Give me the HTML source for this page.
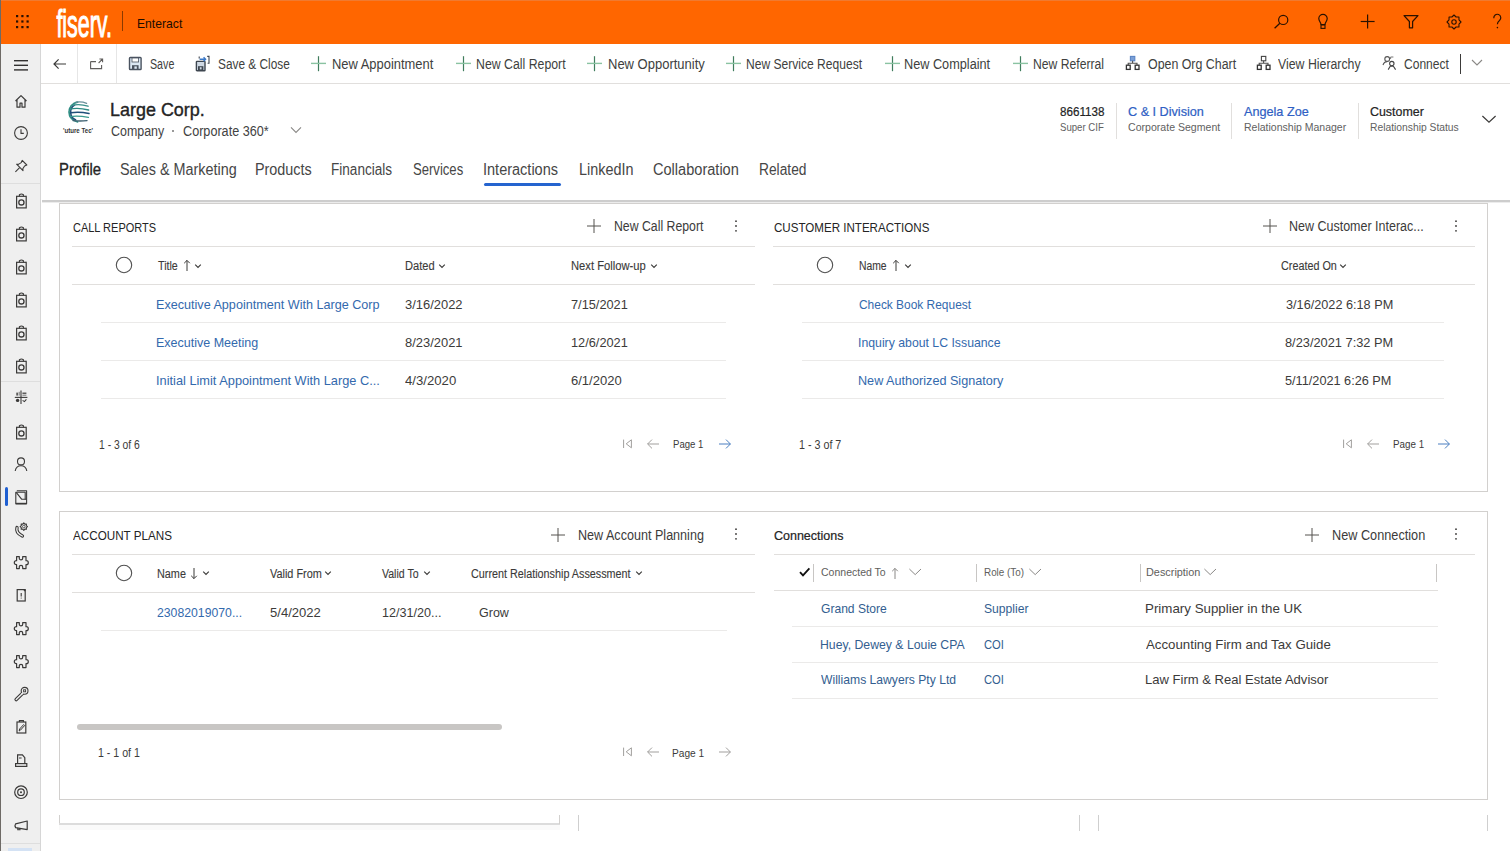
<!DOCTYPE html>
<html><head><meta charset="utf-8"><title>Large Corp. - Enteract</title>
<style>
html,body{margin:0;padding:0;}
body{width:1510px;height:851px;overflow:hidden;position:relative;background:#fff;font-family:'Liberation Sans', sans-serif;}
.t{position:absolute;white-space:nowrap;transform-origin:0 0;}
svg{display:block;overflow:visible;}
</style></head><body>
<div style="position:absolute;left:0px;top:0px;width:1510px;height:44px;background:#ff6600;"></div>
<div style="position:absolute;left:0px;top:0px;width:1510px;height:1px;background:#f07a30;"></div>
<svg style="position:absolute;left:0px;top:0px;" width="44" height="44" viewBox="0 0 44 44"><rect x="16" y="15" width="2.2" height="2.2" fill="#2a0f00"/><rect x="16" y="20.4" width="2.2" height="2.2" fill="#2a0f00"/><rect x="16" y="26" width="2.2" height="2.2" fill="#2a0f00"/><rect x="21.3" y="15" width="2.2" height="2.2" fill="#2a0f00"/><rect x="21.3" y="20.4" width="2.2" height="2.2" fill="#2a0f00"/><rect x="21.3" y="26" width="2.2" height="2.2" fill="#2a0f00"/><rect x="26.5" y="15" width="2.2" height="2.2" fill="#2a0f00"/><rect x="26.5" y="20.4" width="2.2" height="2.2" fill="#2a0f00"/><rect x="26.5" y="26" width="2.2" height="2.2" fill="#2a0f00"/></svg>
<svg style="position:absolute;left:50px;top:0px;" width="70" height="44" viewBox="0 0 70 44"><text x="6.4" y="36.6" font-family="Liberation Sans" font-size="39" fill="#fff" stroke="#fff" stroke-width="1.1" textLength="55.5" lengthAdjust="spacingAndGlyphs">fiserv.</text></svg>
<div style="position:absolute;left:122px;top:11px;width:1px;height:20px;background:#8a3a00;"></div>
<svg style="position:absolute;left:1270px;top:10px;" width="24" height="24" viewBox="0 0 24 24"><circle cx="13.2" cy="9.9" r="4.6" fill="none" stroke="#2a1200" stroke-width="1.2"/><line x1="9.9" y1="13.2" x2="4.6" y2="18.3" stroke="#2a1200" stroke-width="1.3"/></svg>
<svg style="position:absolute;left:1312px;top:10px;" width="24" height="24" viewBox="0 0 24 24"><path d="M9 14.5 C9 12.5 6.8 11.3 6.8 8.6 A4.2 4.2 0 0 1 15.2 8.6 C15.2 11.3 13 12.5 13 14.5 Z" fill="none" stroke="#2a1200" stroke-width="1.2"/><rect x="9" y="15" width="4" height="3.4" fill="none" stroke="#2a1200" stroke-width="1.1"/></svg>
<svg style="position:absolute;left:1356px;top:10px;" width="24" height="24" viewBox="0 0 24 24"><line x1="11.6" y1="4.6" x2="11.6" y2="18.5" stroke="#2a1200" stroke-width="1.2"/><line x1="4.7" y1="11.5" x2="18.6" y2="11.5" stroke="#2a1200" stroke-width="1.2"/></svg>
<svg style="position:absolute;left:1400px;top:10px;" width="24" height="24" viewBox="0 0 24 24"><path d="M4 5.6 H18 L12.6 11.5 V17.8 H9.4 V11.5 Z" fill="none" stroke="#2a1200" stroke-width="1.2" stroke-linejoin="round"/></svg>
<svg style="position:absolute;left:1447px;top:14.5px;" width="14" height="14" viewBox="0 0 14 14"><polygon points="14.00,7.00 11.99,9.07 11.95,11.95 9.07,11.99 7.00,14.00 4.93,11.99 2.05,11.95 2.01,9.07 0.00,7.00 2.01,4.93 2.05,2.05 4.93,2.01 7.00,0.00 9.07,2.01 11.95,2.05 11.99,4.93" fill="none" stroke="#2a1200" stroke-width="1.1" stroke-linejoin="round" transform="translate(0,0)"/><circle cx="7" cy="7" r="2.2" fill="none" stroke="#2a1200" stroke-width="1.1"/></svg>
<svg style="position:absolute;left:1490px;top:10px;" width="14" height="24" viewBox="0 0 14 24"><path d="M3.8 8.2 A3.5 3.5 0 1 1 9.5 10.5 C8 11.6 7.4 12.3 7.4 14.2" fill="none" stroke="#2a1200" stroke-width="1.2"/><circle cx="7.4" cy="17.6" r="0.8" fill="#2a1200"/></svg>
<div style="position:absolute;left:0px;top:44px;width:40px;height:807px;background:#efefef;"></div>
<div style="position:absolute;left:40px;top:44px;width:1px;height:807px;background:#d6d6d6;"></div>
<div style="position:absolute;left:0px;top:0px;width:1px;height:851px;background:#6e6a66;"></div>
<div style="position:absolute;left:1px;top:183px;width:39px;height:1px;background:#dedede;"></div>
<div style="position:absolute;left:1px;top:381px;width:39px;height:1px;background:#dedede;"></div>
<div style="position:absolute;left:1px;top:843px;width:39px;height:1px;background:#dedede;"></div>
<div style="position:absolute;left:5px;top:487px;width:3px;height:19px;background:#1f5fd1;border-radius:1.5px"></div>
<div style="position:absolute;left:8px;top:848px;width:24px;height:3px;background:#d4e2f4;"></div>
<svg style="position:absolute;left:12px;top:58px;" width="18" height="14" viewBox="0 0 18 14"><rect x="2" y="2" width="14" height="1.4" fill="#323130"/><rect x="2" y="6.6" width="14" height="1.4" fill="#323130"/><rect x="2" y="11.2" width="14" height="1.4" fill="#323130"/></svg>
<svg style="position:absolute;left:12px;top:92px;" width="18" height="18" viewBox="0 0 18 18"><path d="M3.5 9 L9 3.6 L14.5 9 M5 7.8 V15.2 H8 V11.2 H10 V15.2 H13 V7.8" fill="none" stroke="#3b3a39" stroke-width="1.2" stroke-linejoin="round"/></svg>
<svg style="position:absolute;left:12px;top:124px;" width="18" height="18" viewBox="0 0 18 18"><circle cx="9" cy="9" r="6.4" fill="none" stroke="#3b3a39" stroke-width="1.1"/><path d="M9 5.2 V9.4 H11.8" fill="none" stroke="#3b3a39" stroke-width="1.1"/></svg>
<svg style="position:absolute;left:12px;top:157px;" width="18" height="18" viewBox="0 0 18 18"><path d="M10.2 3.4 L14.8 8 L12.6 9 L10.8 11.8 L11 13.6 L4.6 7.2 L6.4 7.4 L9.2 5.6 Z" fill="none" stroke="#3b3a39" stroke-width="1.1" stroke-linejoin="round"/><line x1="7.6" y1="10.6" x2="3.4" y2="14.8" stroke="#3b3a39" stroke-width="1.1"/></svg>
<svg style="position:absolute;left:12px;top:191px;" width="18" height="18" viewBox="0 0 18 18"><rect x="4.6" y="5.3" width="9.6" height="11.6" fill="none" stroke="#3b3a39" stroke-width="1.2"/><path d="M7.4 5.3 V3.8 Q9.4 2.2 11.4 3.8 V5.3" fill="none" stroke="#3b3a39" stroke-width="1.1"/><circle cx="9.4" cy="11.4" r="2.6" fill="none" stroke="#3b3a39" stroke-width="1.3"/></svg>
<svg style="position:absolute;left:12px;top:224px;" width="18" height="18" viewBox="0 0 18 18"><rect x="4.6" y="5.3" width="9.6" height="11.6" fill="none" stroke="#3b3a39" stroke-width="1.2"/><path d="M7.4 5.3 V3.8 Q9.4 2.2 11.4 3.8 V5.3" fill="none" stroke="#3b3a39" stroke-width="1.1"/><circle cx="9.4" cy="11.4" r="2.6" fill="none" stroke="#3b3a39" stroke-width="1.3"/></svg>
<svg style="position:absolute;left:12px;top:257px;" width="18" height="18" viewBox="0 0 18 18"><rect x="4.6" y="5.3" width="9.6" height="11.6" fill="none" stroke="#3b3a39" stroke-width="1.2"/><path d="M7.4 5.3 V3.8 Q9.4 2.2 11.4 3.8 V5.3" fill="none" stroke="#3b3a39" stroke-width="1.1"/><circle cx="9.4" cy="11.4" r="2.6" fill="none" stroke="#3b3a39" stroke-width="1.3"/></svg>
<svg style="position:absolute;left:12px;top:290px;" width="18" height="18" viewBox="0 0 18 18"><rect x="4.6" y="5.3" width="9.6" height="11.6" fill="none" stroke="#3b3a39" stroke-width="1.2"/><path d="M7.4 5.3 V3.8 Q9.4 2.2 11.4 3.8 V5.3" fill="none" stroke="#3b3a39" stroke-width="1.1"/><circle cx="9.4" cy="11.4" r="2.6" fill="none" stroke="#3b3a39" stroke-width="1.3"/></svg>
<svg style="position:absolute;left:12px;top:323px;" width="18" height="18" viewBox="0 0 18 18"><rect x="4.6" y="5.3" width="9.6" height="11.6" fill="none" stroke="#3b3a39" stroke-width="1.2"/><path d="M7.4 5.3 V3.8 Q9.4 2.2 11.4 3.8 V5.3" fill="none" stroke="#3b3a39" stroke-width="1.1"/><circle cx="9.4" cy="11.4" r="2.6" fill="none" stroke="#3b3a39" stroke-width="1.3"/></svg>
<svg style="position:absolute;left:12px;top:356px;" width="18" height="18" viewBox="0 0 18 18"><rect x="4.6" y="5.3" width="9.6" height="11.6" fill="none" stroke="#3b3a39" stroke-width="1.2"/><path d="M7.4 5.3 V3.8 Q9.4 2.2 11.4 3.8 V5.3" fill="none" stroke="#3b3a39" stroke-width="1.1"/><circle cx="9.4" cy="11.4" r="2.6" fill="none" stroke="#3b3a39" stroke-width="1.3"/></svg>
<svg style="position:absolute;left:12px;top:388px;" width="18" height="18" viewBox="0 0 18 18"><line x1="9" y1="2.6" x2="9" y2="16" stroke="#3b3a39" stroke-width="1.1"/><line x1="2.8" y1="9.4" x2="15.4" y2="9.4" stroke="#3b3a39" stroke-width="1.1"/><rect x="4.4" y="4.6" width="1.4" height="3" fill="#3b3a39"/><rect x="6.6" y="3.8" width="1.2" height="3.8" fill="#888"/><rect x="10.4" y="4.6" width="4" height="1.2" fill="#3b3a39"/><rect x="10.4" y="6.6" width="4" height="1.2" fill="#888"/><circle cx="5.6" cy="12.4" r="1.7" fill="#3b3a39"/><path d="M10.6 12.4 L12.4 13.6 L14.4 11.4" fill="none" stroke="#3b3a39" stroke-width="1.1"/></svg>
<svg style="position:absolute;left:12px;top:422px;" width="18" height="18" viewBox="0 0 18 18"><rect x="4.6" y="5.3" width="9.6" height="11.6" fill="none" stroke="#3b3a39" stroke-width="1.2"/><path d="M7.4 5.3 V3.8 Q9.4 2.2 11.4 3.8 V5.3" fill="none" stroke="#3b3a39" stroke-width="1.1"/><circle cx="9.4" cy="11.4" r="2.6" fill="none" stroke="#3b3a39" stroke-width="1.3"/></svg>
<svg style="position:absolute;left:12px;top:455px;" width="18" height="18" viewBox="0 0 18 18"><circle cx="9" cy="6.4" r="3.5" fill="none" stroke="#3b3a39" stroke-width="1.1"/><path d="M3.2 16 Q4 10.8 9 10.8 Q14 10.8 14.8 16" fill="none" stroke="#3b3a39" stroke-width="1.1"/></svg>
<svg style="position:absolute;left:12px;top:488px;" width="18" height="18" viewBox="0 0 18 18"><path d="M4.8 2.8 H14.6 V15.8 H3.8 V4.2 H13.2 V11.4" fill="none" stroke="#3b3a39" stroke-width="1.1" stroke-linejoin="round"/><path d="M4.2 4.4 L9.6 11.2 H14.4" fill="none" stroke="#3b3a39" stroke-width="1.1"/><line x1="3.8" y1="15.6" x2="14.6" y2="15.6" stroke="#3b3a39" stroke-width="1.6"/></svg>
<svg style="position:absolute;left:12px;top:520px;" width="18" height="18" viewBox="0 0 18 18"><path d="M5 7.6 Q3.6 12.6 10.4 16" fill="none" stroke="#3b3a39" stroke-width="3.4" stroke-linecap="round"/><path d="M5 7.6 Q3.6 12.6 10.4 16" fill="none" stroke="#efefef" stroke-width="1.3" stroke-linecap="round"/><polygon points="15.50,6.60 14.29,7.63 14.42,9.22 12.83,9.09 11.80,10.30 10.77,9.09 9.18,9.22 9.31,7.63 8.10,6.60 9.31,5.57 9.18,3.98 10.77,4.11 11.80,2.90 12.83,4.11 14.42,3.98 14.29,5.57" fill="#efefef" stroke="#3b3a39" stroke-width="1.1" stroke-linejoin="round"/><circle cx="11.8" cy="6.6" r="1.3" fill="none" stroke="#3b3a39" stroke-width="0.8"/></svg>
<svg style="position:absolute;left:12px;top:553px;" width="18" height="18" viewBox="0 0 18 18"><path d="M4.3 3.6 H7 V5.2 A1.7 1.7 0 0 0 10.4 5.2 V3.6 H13.7 V7.7 H14 A2 2 0 0 1 14 11.7 H13.7 V15.6 H10.4 V14 A1.7 1.7 0 0 0 7 14 V15.6 H4.3 V11.7 H4 A2 2 0 0 1 4 7.7 H4.3 Z" fill="none" stroke="#3b3a39" stroke-width="1.2" stroke-linejoin="round" transform="translate(0.3,0)"/></svg>
<svg style="position:absolute;left:12px;top:586px;" width="18" height="18" viewBox="0 0 18 18"><rect x="5.2" y="3.6" width="8" height="11.4" fill="none" stroke="#3b3a39" stroke-width="1.2"/><line x1="9.2" y1="7" x2="9.2" y2="10.6" stroke="#3b3a39" stroke-width="1.1"/><circle cx="9.2" cy="12" r="0.6" fill="#3b3a39"/><path d="M12 3.6 L13.2 5" stroke="#3b3a39" stroke-width="1.6"/></svg>
<svg style="position:absolute;left:12px;top:619px;" width="18" height="18" viewBox="0 0 18 18"><path d="M4.3 3.6 H7 V5.2 A1.7 1.7 0 0 0 10.4 5.2 V3.6 H13.7 V7.7 H14 A2 2 0 0 1 14 11.7 H13.7 V15.6 H10.4 V14 A1.7 1.7 0 0 0 7 14 V15.6 H4.3 V11.7 H4 A2 2 0 0 1 4 7.7 H4.3 Z" fill="none" stroke="#3b3a39" stroke-width="1.2" stroke-linejoin="round" transform="translate(0.3,0)"/></svg>
<svg style="position:absolute;left:12px;top:652px;" width="18" height="18" viewBox="0 0 18 18"><path d="M4.3 3.6 H7 V5.2 A1.7 1.7 0 0 0 10.4 5.2 V3.6 H13.7 V7.7 H14 A2 2 0 0 1 14 11.7 H13.7 V15.6 H10.4 V14 A1.7 1.7 0 0 0 7 14 V15.6 H4.3 V11.7 H4 A2 2 0 0 1 4 7.7 H4.3 Z" fill="none" stroke="#3b3a39" stroke-width="1.2" stroke-linejoin="round" transform="translate(0.3,0)"/></svg>
<svg style="position:absolute;left:12px;top:684px;" width="18" height="18" viewBox="0 0 18 18"><line x1="4.2" y1="15.6" x2="10.6" y2="9.2" stroke="#3b3a39" stroke-width="3.6" stroke-linecap="round"/><line x1="4.2" y1="15.6" x2="10.6" y2="9.2" stroke="#efefef" stroke-width="1.4" stroke-linecap="round"/><circle cx="12.6" cy="6.8" r="3.4" fill="#efefef" stroke="#3b3a39" stroke-width="1.1"/><line x1="9.4" y1="10.4" x2="11" y2="8.8" stroke="#efefef" stroke-width="1.6"/><rect x="11.6" y="5.8" width="2" height="2" fill="none" stroke="#3b3a39" stroke-width="0.9"/></svg>
<svg style="position:absolute;left:12px;top:717px;" width="18" height="18" viewBox="0 0 18 18"><rect x="5" y="5" width="8.8" height="11" fill="none" stroke="#3b3a39" stroke-width="1.2"/><path d="M7.4 5 V3.6 H11.4 V5" fill="none" stroke="#3b3a39" stroke-width="1.1"/><path d="M7.2 14 L7.6 12 L11.6 7.6 L12.6 8.6 L8.6 13 Z" fill="none" stroke="#3b3a39" stroke-width="1"/></svg>
<svg style="position:absolute;left:12px;top:751px;" width="18" height="18" viewBox="0 0 18 18"><path d="M5.6 12.6 V3.8 H10.4 L12.8 6.6 V12.6" fill="none" stroke="#3b3a39" stroke-width="1.2"/><rect x="3.6" y="12.6" width="11.2" height="2.8" fill="none" stroke="#3b3a39" stroke-width="1.2"/><line x1="7" y1="7" x2="9.6" y2="7" stroke="#3b3a39" stroke-width="1"/></svg>
<svg style="position:absolute;left:12px;top:783px;" width="18" height="18" viewBox="0 0 18 18"><circle cx="9" cy="9.2" r="6.3" fill="none" stroke="#3b3a39" stroke-width="1.2"/><circle cx="9" cy="9.2" r="3.3" fill="none" stroke="#3b3a39" stroke-width="1.2"/><circle cx="9" cy="9.2" r="1" fill="#3b3a39"/></svg>
<svg style="position:absolute;left:12px;top:816px;" width="18" height="18" viewBox="0 0 18 18"><path d="M3.6 7.8 L15.2 5 V13.6 L3.6 11.6 Q2.4 9.7 3.6 7.8 Z" fill="none" stroke="#3b3a39" stroke-width="1.2" stroke-linejoin="round"/><path d="M5.8 11.9 V13.8 H8 V12.3" fill="none" stroke="#3b3a39" stroke-width="1.1"/></svg>
<div style="position:absolute;left:41px;top:83px;width:1469px;height:1px;background:#e1dfdd;"></div>
<div style="position:absolute;left:77px;top:44px;width:1px;height:39px;background:#e6e6e6;"></div>
<div style="position:absolute;left:116px;top:44px;width:1px;height:39px;background:#e6e6e6;"></div>
<svg style="position:absolute;left:50px;top:55px;" width="20" height="18" viewBox="0 0 20 18"><path d="M4 9 H16 M8.6 4.4 L4 9 L8.6 13.6" fill="none" stroke="#3b3a39" stroke-width="1.2"/></svg>
<svg style="position:absolute;left:88px;top:55px;" width="18" height="18" viewBox="0 0 18 18"><path d="M2.6 6.6 V13.6 H13.6 V10 M2.6 6.6 H8" fill="none" stroke="#605e5c" stroke-width="1.1"/><path d="M10.6 8 L14.4 4.2 M11.4 4 H14.6 V7.2" fill="none" stroke="#605e5c" stroke-width="1.1"/></svg>
<svg style="position:absolute;left:128px;top:56px;" width="15" height="15" viewBox="0 0 15 15"><rect x="1.5" y="1.5" width="11.6" height="12" rx="0.8" fill="#dbe7f3" stroke="#4a5360" stroke-width="1.4"/><rect x="4" y="2" width="6.6" height="4" fill="#fff" stroke="#4a5360" stroke-width="0.8"/><rect x="4" y="9.2" width="6.6" height="4.3" fill="#4a5360"/><rect x="6.4" y="10.4" width="2.4" height="2.4" fill="#dbe7f3"/></svg>
<svg style="position:absolute;left:195px;top:55px;" width="16" height="17" viewBox="0 0 16 17"><rect x="1.4" y="6.4" width="8.6" height="9.4" rx="0.6" fill="#cfd9e4" stroke="#3e4650" stroke-width="1.4"/><rect x="3" y="11.2" width="5.4" height="4.4" fill="#3e4650"/><rect x="4.8" y="12.2" width="1.8" height="2.2" fill="#cfd9e4"/><path d="M4.6 4.2 H10.6 M8.6 2.2 L10.6 4.2 L8.6 6.2" fill="none" stroke="#3a78c8" stroke-width="1.4"/><path d="M4.2 1.4 V3.4 M12.2 1.4 H14 V8.2 H12.6" fill="none" stroke="#3e4650" stroke-width="1.1"/></svg>
<svg style="position:absolute;left:310px;top:55px;" width="17" height="17" viewBox="0 0 17 17"><line x1="8.5" y1="1.2" x2="8.5" y2="16.2" stroke="#3f7d5d" stroke-width="1.2"/><line x1="1" y1="8.4" x2="16" y2="8.4" stroke="#8ac3a2" stroke-width="1.4"/></svg>
<svg style="position:absolute;left:455px;top:55px;" width="17" height="17" viewBox="0 0 17 17"><line x1="8.5" y1="1.2" x2="8.5" y2="16.2" stroke="#3f7d5d" stroke-width="1.2"/><line x1="1" y1="8.4" x2="16" y2="8.4" stroke="#8ac3a2" stroke-width="1.4"/></svg>
<svg style="position:absolute;left:586px;top:55px;" width="17" height="17" viewBox="0 0 17 17"><line x1="8.5" y1="1.2" x2="8.5" y2="16.2" stroke="#3f7d5d" stroke-width="1.2"/><line x1="1" y1="8.4" x2="16" y2="8.4" stroke="#8ac3a2" stroke-width="1.4"/></svg>
<svg style="position:absolute;left:725px;top:55px;" width="17" height="17" viewBox="0 0 17 17"><line x1="8.5" y1="1.2" x2="8.5" y2="16.2" stroke="#3f7d5d" stroke-width="1.2"/><line x1="1" y1="8.4" x2="16" y2="8.4" stroke="#8ac3a2" stroke-width="1.4"/></svg>
<svg style="position:absolute;left:884px;top:55px;" width="17" height="17" viewBox="0 0 17 17"><line x1="8.5" y1="1.2" x2="8.5" y2="16.2" stroke="#3f7d5d" stroke-width="1.2"/><line x1="1" y1="8.4" x2="16" y2="8.4" stroke="#8ac3a2" stroke-width="1.4"/></svg>
<svg style="position:absolute;left:1012px;top:55px;" width="17" height="17" viewBox="0 0 17 17"><line x1="8.5" y1="1.2" x2="8.5" y2="16.2" stroke="#3f7d5d" stroke-width="1.2"/><line x1="1" y1="8.4" x2="16" y2="8.4" stroke="#8ac3a2" stroke-width="1.4"/></svg>
<svg style="position:absolute;left:1125px;top:54px;" width="16" height="18" viewBox="0 0 16 18"><rect x="5.4" y="2.4" width="4.4" height="4.4" fill="#7a9fd6" stroke="#5a84c4" stroke-width="1.1"/><path d="M7.6 6.8 V9.2 M3.2 11 V9.2 H12 V11" fill="none" stroke="#505050" stroke-width="1.1"/><rect x="1.4" y="11.2" width="3.8" height="4.2" fill="#fff" stroke="#333" stroke-width="1.3"/><rect x="10.2" y="11.2" width="3.8" height="4.2" fill="#fff" stroke="#333" stroke-width="1.3"/></svg>
<svg style="position:absolute;left:1255.5px;top:54px;" width="16" height="18" viewBox="0 0 16 18"><rect x="5.4" y="2.4" width="4.4" height="4.4" fill="#fff" stroke="#444" stroke-width="1.1"/><path d="M7.6 6.8 V9.2 M3.2 11 V9.2 H12 V11" fill="none" stroke="#505050" stroke-width="1.1"/><rect x="1.4" y="11.2" width="3.8" height="4.2" fill="#fff" stroke="#333" stroke-width="1.3"/><rect x="10.2" y="11.2" width="3.8" height="4.2" fill="#fff" stroke="#333" stroke-width="1.3"/></svg>
<svg style="position:absolute;left:1382px;top:55px;" width="16" height="16" viewBox="0 0 16 16"><circle cx="5.2" cy="4" r="2.4" fill="none" stroke="#555" stroke-width="1.1"/><path d="M1 10 Q2 6.6 5.2 6.6" fill="none" stroke="#555" stroke-width="1.1"/><path d="M8.6 2 H11.4 M8.6 2 V4" fill="none" stroke="#777" stroke-width="1"/><circle cx="9.8" cy="8.6" r="2.2" fill="none" stroke="#444" stroke-width="1.1"/><path d="M6.2 14.6 L8.2 11.2 H11.4 L13.6 14.6" fill="none" stroke="#444" stroke-width="1.1"/></svg>
<div style="position:absolute;left:1460px;top:54px;width:1px;height:20px;background:#3b3a39;"></div>
<svg style="position:absolute;left:1470px;top:56px;" width="14" height="12" viewBox="0 0 14 12"><path d="M2 4 L7 9 L12 4" fill="none" stroke="#8a8886" stroke-width="1.1"/></svg>
<svg style="position:absolute;left:60px;top:98px;" width="36" height="38" viewBox="0 0 36 38"><g fill="none" stroke-linecap="round">
<path d="M17.6 4.2 A10 9.9 0 0 0 17.6 23.8" stroke="#2f8f84" stroke-width="1.7"/>
<path d="M14.6 7.2 A6.4 7.6 0 0 0 15.6 21.6" stroke="#1f4f78" stroke-width="1.5"/>
<path d="M16 4.2 Q22 3.4 26.6 5.4" stroke="#6a8f9a" stroke-width="1.3"/>
<path d="M11.4 7.6 Q19 5.4 28 8.2" stroke="#3a8f8a" stroke-width="1.4"/>
<path d="M9.4 11.2 Q18 9.2 28.6 12" stroke="#2d8a84" stroke-width="1.4"/>
<path d="M10.6 14.8 Q19 13.2 29 15.6" stroke="#1f4f7a" stroke-width="1.5"/>
<path d="M9.8 18.6 Q18 17.4 28.4 19.4" stroke="#3a9a90" stroke-width="1.4"/>
<path d="M13 22.6 Q20 23.4 27 22.6" stroke="#3d6070" stroke-width="1.4"/>
</g>
<text x="3" y="34.6" font-family="Liberation Sans" font-size="6.4" font-weight="700" fill="#333" textLength="30" lengthAdjust="spacingAndGlyphs">'uture Tec'</text></svg>
<div style="position:absolute;left:172.4px;top:130.4px;width:1.6px;height:1.6px;background:#777;border-radius:1px"></div>
<svg style="position:absolute;left:289px;top:125px;" width="14" height="10" viewBox="0 0 14 10"><path d="M2 2.4 L7 7.4 L12 2.4" fill="none" stroke="#8a8886" stroke-width="1.1"/></svg>
<div style="position:absolute;left:1116px;top:103px;width:1px;height:36px;background:#e1dfdd;"></div>
<div style="position:absolute;left:1231px;top:103px;width:1px;height:36px;background:#e1dfdd;"></div>
<div style="position:absolute;left:1358px;top:103px;width:1px;height:36px;background:#e1dfdd;"></div>
<svg style="position:absolute;left:1480px;top:113px;" width="18" height="12" viewBox="0 0 18 12"><path d="M2.4 3 L9 9.2 L15.6 3" fill="none" stroke="#3b3a39" stroke-width="1.2"/></svg>
<div style="position:absolute;left:484px;top:183px;width:77px;height:3px;background:#2564cf;border-radius:1.5px"></div>
<div style="position:absolute;left:42px;top:200px;width:1468px;height:2px;background:#cdcdcd;"></div>
<div style="position:absolute;left:42px;top:202px;width:1468px;height:1px;background:#ececec;"></div>
<div style="position:absolute;left:59px;top:203px;width:1427px;height:287px;border:1px solid #d2d0ce;background:#fff"></div>
<div style="position:absolute;left:59px;top:511px;width:1427px;height:287px;border:1px solid #d2d0ce;background:#fff"></div>
<div style="position:absolute;left:59px;top:815px;width:1px;height:9px;background:#d2d0ce;"></div>
<div style="position:absolute;left:59px;top:823px;width:501px;height:2px;background:#dcdcdc;"></div>
<div style="position:absolute;left:559px;top:815px;width:1px;height:9px;background:#d2d0ce;"></div>
<div style="position:absolute;left:59px;top:825px;width:501px;height:5px;background:#fafafa;"></div>
<div style="position:absolute;left:578px;top:815px;width:1px;height:16px;background:#cfcfcf;"></div>
<div style="position:absolute;left:1079px;top:815px;width:1px;height:16px;background:#cfcfcf;"></div>
<div style="position:absolute;left:1098px;top:815px;width:1px;height:16px;background:#cfcfcf;"></div>
<div style="position:absolute;left:1487px;top:815px;width:1px;height:16px;background:#cfcfcf;"></div>
<svg style="position:absolute;left:586.4px;top:217.8px;" width="16" height="16" viewBox="0 0 16 16"><line x1="8" y1="1" x2="8" y2="15" stroke="#55534f" stroke-width="1"/><line x1="1" y1="8" x2="15" y2="8" stroke="#55534f" stroke-width="1"/></svg>
<svg style="position:absolute;left:732.6px;top:217.5px;" width="6" height="16" viewBox="0 0 6 16"><circle cx="3" cy="3.2" r="0.9" fill="#3b3a39"/><circle cx="3" cy="8" r="0.9" fill="#3b3a39"/><circle cx="3" cy="12.8" r="0.9" fill="#3b3a39"/></svg>
<div style="position:absolute;left:72px;top:246px;width:683px;height:1px;background:#e1dfdd;"></div>
<svg style="position:absolute;left:114.6px;top:256px;" width="18" height="18" viewBox="0 0 18 18"><circle cx="9" cy="9" r="7.7" fill="none" stroke="#505050" stroke-width="1.1"/></svg>
<svg style="position:absolute;left:182.6px;top:259.2px;" width="8" height="13" viewBox="0 0 8 13"><path d="M4 1.4 V12 M1.2 4.2 L4 1.4 L6.8 4.2" fill="none" stroke="#3b3a39" stroke-width="1"/></svg>
<svg style="position:absolute;left:194px;top:261.6px;" width="8" height="8" viewBox="0 0 8 8"><path d="M1.2 2.6 L4 5.4 L6.8 2.6" fill="none" stroke="#3b3a39" stroke-width="1.15"/></svg>
<svg style="position:absolute;left:437.6px;top:261.6px;" width="8" height="8" viewBox="0 0 8 8"><path d="M1.2 2.6 L4 5.4 L6.8 2.6" fill="none" stroke="#3b3a39" stroke-width="1.15"/></svg>
<svg style="position:absolute;left:649.8px;top:261.6px;" width="8" height="8" viewBox="0 0 8 8"><path d="M1.2 2.6 L4 5.4 L6.8 2.6" fill="none" stroke="#3b3a39" stroke-width="1.15"/></svg>
<div style="position:absolute;left:72px;top:284px;width:683px;height:1px;background:#e1dfdd;"></div>
<div style="position:absolute;left:101px;top:322px;width:625px;height:1px;background:#ebeae9;"></div>
<div style="position:absolute;left:101px;top:360px;width:625px;height:1px;background:#ebeae9;"></div>
<div style="position:absolute;left:101px;top:398px;width:625px;height:1px;background:#ebeae9;"></div>
<svg style="position:absolute;left:622px;top:437.5px;" width="12" height="12" viewBox="0 0 12 12"><line x1="1.6" y1="1.6" x2="1.6" y2="10" stroke="#a19f9d" stroke-width="1"/><path d="M9.4 1.8 L4.2 5.8 L9.4 9.8 Z" fill="none" stroke="#a19f9d" stroke-width="1"/></svg>
<svg style="position:absolute;left:646px;top:437.5px;" width="14" height="12" viewBox="0 0 14 12"><path d="M13 6 H1.6 M6 1.6 L1.6 6 L6 10.4" fill="none" stroke="#a19f9d" stroke-width="1"/></svg>
<svg style="position:absolute;left:718px;top:437.5px;" width="14" height="12" viewBox="0 0 14 12"><path d="M1 6 H12.4 M8 1.6 L12.4 6 L8 10.4" fill="none" stroke="#4a7fc1" stroke-width="1"/></svg>
<svg style="position:absolute;left:1261.5px;top:217.8px;" width="16" height="16" viewBox="0 0 16 16"><line x1="8" y1="1" x2="8" y2="15" stroke="#55534f" stroke-width="1"/><line x1="1" y1="8" x2="15" y2="8" stroke="#55534f" stroke-width="1"/></svg>
<svg style="position:absolute;left:1452.8px;top:217.5px;" width="6" height="16" viewBox="0 0 6 16"><circle cx="3" cy="3.2" r="0.9" fill="#3b3a39"/><circle cx="3" cy="8" r="0.9" fill="#3b3a39"/><circle cx="3" cy="12.8" r="0.9" fill="#3b3a39"/></svg>
<div style="position:absolute;left:773px;top:246px;width:702px;height:1px;background:#e1dfdd;"></div>
<svg style="position:absolute;left:815.7px;top:256px;" width="18" height="18" viewBox="0 0 18 18"><circle cx="9" cy="9" r="7.7" fill="none" stroke="#505050" stroke-width="1.1"/></svg>
<svg style="position:absolute;left:892.3px;top:259.2px;" width="8" height="13" viewBox="0 0 8 13"><path d="M4 1.4 V12 M1.2 4.2 L4 1.4 L6.8 4.2" fill="none" stroke="#3b3a39" stroke-width="1"/></svg>
<svg style="position:absolute;left:904px;top:261.6px;" width="8" height="8" viewBox="0 0 8 8"><path d="M1.2 2.6 L4 5.4 L6.8 2.6" fill="none" stroke="#3b3a39" stroke-width="1.15"/></svg>
<svg style="position:absolute;left:1339px;top:261.6px;" width="8" height="8" viewBox="0 0 8 8"><path d="M1.2 2.6 L4 5.4 L6.8 2.6" fill="none" stroke="#3b3a39" stroke-width="1.15"/></svg>
<div style="position:absolute;left:773px;top:284px;width:702px;height:1px;background:#e1dfdd;"></div>
<div style="position:absolute;left:802px;top:322px;width:642px;height:1px;background:#ebeae9;"></div>
<div style="position:absolute;left:802px;top:360px;width:642px;height:1px;background:#ebeae9;"></div>
<div style="position:absolute;left:802px;top:398px;width:642px;height:1px;background:#ebeae9;"></div>
<svg style="position:absolute;left:1341.6px;top:437.5px;" width="12" height="12" viewBox="0 0 12 12"><line x1="1.6" y1="1.6" x2="1.6" y2="10" stroke="#a19f9d" stroke-width="1"/><path d="M9.4 1.8 L4.2 5.8 L9.4 9.8 Z" fill="none" stroke="#a19f9d" stroke-width="1"/></svg>
<svg style="position:absolute;left:1365.5px;top:437.5px;" width="14" height="12" viewBox="0 0 14 12"><path d="M13 6 H1.6 M6 1.6 L1.6 6 L6 10.4" fill="none" stroke="#a19f9d" stroke-width="1"/></svg>
<svg style="position:absolute;left:1437px;top:437.5px;" width="14" height="12" viewBox="0 0 14 12"><path d="M1 6 H12.4 M8 1.6 L12.4 6 L8 10.4" fill="none" stroke="#4a7fc1" stroke-width="1"/></svg>
<svg style="position:absolute;left:549.7px;top:526.5px;" width="16" height="16" viewBox="0 0 16 16"><line x1="8" y1="1" x2="8" y2="15" stroke="#55534f" stroke-width="1"/><line x1="1" y1="8" x2="15" y2="8" stroke="#55534f" stroke-width="1"/></svg>
<svg style="position:absolute;left:732.9px;top:526px;" width="6" height="16" viewBox="0 0 6 16"><circle cx="3" cy="3.2" r="0.9" fill="#3b3a39"/><circle cx="3" cy="8" r="0.9" fill="#3b3a39"/><circle cx="3" cy="12.8" r="0.9" fill="#3b3a39"/></svg>
<div style="position:absolute;left:72px;top:554px;width:683px;height:1px;background:#e1dfdd;"></div>
<svg style="position:absolute;left:114.7px;top:563.8px;" width="18" height="18" viewBox="0 0 18 18"><circle cx="9" cy="9" r="7.7" fill="none" stroke="#505050" stroke-width="1.1"/></svg>
<svg style="position:absolute;left:189.8px;top:567px;" width="8" height="13" viewBox="0 0 8 13"><path d="M4 1 V11.6 M1.2 8.8 L4 11.6 L6.8 8.8" fill="none" stroke="#3b3a39" stroke-width="1"/></svg>
<svg style="position:absolute;left:201.6px;top:569.4px;" width="8" height="8" viewBox="0 0 8 8"><path d="M1.2 2.6 L4 5.4 L6.8 2.6" fill="none" stroke="#3b3a39" stroke-width="1.15"/></svg>
<svg style="position:absolute;left:323.6px;top:569.4px;" width="8" height="8" viewBox="0 0 8 8"><path d="M1.2 2.6 L4 5.4 L6.8 2.6" fill="none" stroke="#3b3a39" stroke-width="1.15"/></svg>
<svg style="position:absolute;left:423px;top:569.4px;" width="8" height="8" viewBox="0 0 8 8"><path d="M1.2 2.6 L4 5.4 L6.8 2.6" fill="none" stroke="#3b3a39" stroke-width="1.15"/></svg>
<svg style="position:absolute;left:634.7px;top:569.4px;" width="8" height="8" viewBox="0 0 8 8"><path d="M1.2 2.6 L4 5.4 L6.8 2.6" fill="none" stroke="#3b3a39" stroke-width="1.15"/></svg>
<div style="position:absolute;left:72px;top:592px;width:683px;height:1px;background:#e1dfdd;"></div>
<div style="position:absolute;left:101px;top:630px;width:626px;height:1px;background:#ebeae9;"></div>
<div style="position:absolute;left:77px;top:724px;width:425px;height:6px;background:#c8c6c4;border-radius:3px"></div>
<svg style="position:absolute;left:621.6px;top:746.3px;" width="12" height="12" viewBox="0 0 12 12"><line x1="1.6" y1="1.6" x2="1.6" y2="10" stroke="#a19f9d" stroke-width="1"/><path d="M9.4 1.8 L4.2 5.8 L9.4 9.8 Z" fill="none" stroke="#a19f9d" stroke-width="1"/></svg>
<svg style="position:absolute;left:645.6px;top:746.3px;" width="14" height="12" viewBox="0 0 14 12"><path d="M13 6 H1.6 M6 1.6 L1.6 6 L6 10.4" fill="none" stroke="#a19f9d" stroke-width="1"/></svg>
<svg style="position:absolute;left:717.5px;top:746.3px;" width="14" height="12" viewBox="0 0 14 12"><path d="M1 6 H12.4 M8 1.6 L12.4 6 L8 10.4" fill="none" stroke="#a19f9d" stroke-width="1"/></svg>
<svg style="position:absolute;left:1303.8px;top:526.5px;" width="16" height="16" viewBox="0 0 16 16"><line x1="8" y1="1" x2="8" y2="15" stroke="#55534f" stroke-width="1"/><line x1="1" y1="8" x2="15" y2="8" stroke="#55534f" stroke-width="1"/></svg>
<svg style="position:absolute;left:1452.5px;top:526px;" width="6" height="16" viewBox="0 0 6 16"><circle cx="3" cy="3.2" r="0.9" fill="#3b3a39"/><circle cx="3" cy="8" r="0.9" fill="#3b3a39"/><circle cx="3" cy="12.8" r="0.9" fill="#3b3a39"/></svg>
<div style="position:absolute;left:774px;top:554px;width:701px;height:1px;background:#e1dfdd;"></div>
<svg style="position:absolute;left:798px;top:566px;" width="14" height="12" viewBox="0 0 14 12"><path d="M2 6.2 L5 9.4 L11.4 2.4" fill="none" stroke="#111" stroke-width="1.8"/></svg>
<div style="position:absolute;left:813px;top:564px;width:1px;height:18px;background:#c8c6c4;"></div>
<div style="position:absolute;left:976px;top:564px;width:1px;height:18px;background:#c8c6c4;"></div>
<div style="position:absolute;left:1140px;top:564px;width:1px;height:18px;background:#c8c6c4;"></div>
<div style="position:absolute;left:1436px;top:564px;width:1px;height:18px;background:#c8c6c4;"></div>
<svg style="position:absolute;left:891.3px;top:566.6px;" width="8" height="13" viewBox="0 0 8 13"><path d="M4 1.4 V12 M1.2 4.2 L4 1.4 L6.8 4.2" fill="none" stroke="#8a8886" stroke-width="1"/></svg>
<svg style="position:absolute;left:908px;top:567px;" width="15" height="10" viewBox="0 0 15 10"><path d="M1.4 2 L7.2 7.6 L13 2" fill="none" stroke="#8a8886" stroke-width="1"/></svg>
<svg style="position:absolute;left:1028px;top:567px;" width="15" height="10" viewBox="0 0 15 10"><path d="M1.4 2 L7.2 7.6 L13 2" fill="none" stroke="#8a8886" stroke-width="1"/></svg>
<svg style="position:absolute;left:1203px;top:567px;" width="15" height="10" viewBox="0 0 15 10"><path d="M1.4 2 L7.2 7.6 L13 2" fill="none" stroke="#8a8886" stroke-width="1"/></svg>
<div style="position:absolute;left:774px;top:590px;width:664px;height:1px;background:#e1dfdd;"></div>
<div style="position:absolute;left:792px;top:626px;width:646px;height:1px;background:#ebeae9;"></div>
<div style="position:absolute;left:792px;top:662px;width:646px;height:1px;background:#ebeae9;"></div>
<div style="position:absolute;left:792px;top:698px;width:646px;height:1px;background:#ebeae9;"></div>
<div class="t" style="left:137.06px;top:16.80px;font-size:13px;line-height:13px;color:#1c0c00;transform:scaleX(0.9351);">Enteract</div>
<div class="t" style="left:149.50px;top:57.15px;font-size:14px;line-height:14px;color:#403f3e;transform:scaleX(0.7627);">Save</div>
<div class="t" style="left:217.50px;top:57.15px;font-size:14px;line-height:14px;color:#403f3e;transform:scaleX(0.8467);">Save &amp; Close</div>
<div class="t" style="left:331.88px;top:57.15px;font-size:14px;line-height:14px;color:#403f3e;transform:scaleX(0.9232);">New Appointment</div>
<div class="t" style="left:475.92px;top:57.15px;font-size:14px;line-height:14px;color:#403f3e;transform:scaleX(0.8789);">New Call Report</div>
<div class="t" style="left:607.77px;top:57.15px;font-size:14px;line-height:14px;color:#403f3e;transform:scaleX(0.9286);">New Opportunity</div>
<div class="t" style="left:746.14px;top:57.15px;font-size:14px;line-height:14px;color:#403f3e;transform:scaleX(0.8622);">New Service Request</div>
<div class="t" style="left:904.49px;top:57.15px;font-size:14px;line-height:14px;color:#403f3e;transform:scaleX(0.9071);">New Complaint</div>
<div class="t" style="left:1033.13px;top:57.15px;font-size:14px;line-height:14px;color:#403f3e;transform:scaleX(0.8687);">New Referral</div>
<div class="t" style="left:1147.80px;top:57.15px;font-size:14px;line-height:14px;color:#403f3e;transform:scaleX(0.8846);">Open Org Chart</div>
<div class="t" style="left:1278.00px;top:57.15px;font-size:14px;line-height:14px;color:#403f3e;transform:scaleX(0.8798);">View Hierarchy</div>
<div class="t" style="left:1403.70px;top:57.15px;font-size:14px;line-height:14px;color:#403f3e;transform:scaleX(0.8612);">Connect</div>
<div class="t" style="left:110.46px;top:99.92px;font-size:19px;line-height:19px;color:#242424;-webkit-text-stroke:0.38px #242424;transform:scaleX(0.9444);">Large Corp.</div>
<div class="t" style="left:111.40px;top:123.55px;font-size:14px;line-height:14px;color:#424242;transform:scaleX(0.8879);">Company</div>
<div class="t" style="left:182.80px;top:123.55px;font-size:14px;line-height:14px;color:#424242;transform:scaleX(0.9026);">Corporate 360*</div>
<div class="t" style="left:1060.00px;top:104.50px;font-size:13px;line-height:13px;color:#242424;-webkit-text-stroke:0.22px #242424;transform:scaleX(0.8965);">8661138</div>
<div class="t" style="left:1060.00px;top:121.69px;font-size:11px;line-height:11px;color:#616161;transform:scaleX(0.8729);">Super CIF</div>
<div class="t" style="left:1128.00px;top:104.50px;font-size:13px;line-height:13px;color:#2f5fc4;-webkit-text-stroke:0.22px #2f5fc4;transform:scaleX(0.9719);">C &amp; I Division</div>
<div class="t" style="left:1128.00px;top:121.69px;font-size:11px;line-height:11px;color:#616161;transform:scaleX(0.9610);">Corporate Segment</div>
<div class="t" style="left:1243.50px;top:104.50px;font-size:13px;line-height:13px;color:#2f5fc4;-webkit-text-stroke:0.22px #2f5fc4;transform:scaleX(0.9734);">Angela Zoe</div>
<div class="t" style="left:1243.50px;top:121.69px;font-size:11px;line-height:11px;color:#616161;transform:scaleX(0.9549);">Relationship Manager</div>
<div class="t" style="left:1369.60px;top:104.50px;font-size:13px;line-height:13px;color:#242424;-webkit-text-stroke:0.22px #242424;transform:scaleX(0.9541);">Customer</div>
<div class="t" style="left:1369.60px;top:121.69px;font-size:11px;line-height:11px;color:#616161;transform:scaleX(0.9362);">Relationship Status</div>
<div class="t" style="left:59.07px;top:161.76px;font-size:16px;line-height:16px;color:#242424;-webkit-text-stroke:0.32px #242424;transform:scaleX(0.9268);">Profile</div>
<div class="t" style="left:119.80px;top:161.76px;font-size:16px;line-height:16px;color:#464646;transform:scaleX(0.8989);">Sales &amp; Marketing</div>
<div class="t" style="left:255.10px;top:161.76px;font-size:16px;line-height:16px;color:#464646;transform:scaleX(0.8980);">Products</div>
<div class="t" style="left:331.15px;top:161.76px;font-size:16px;line-height:16px;color:#464646;transform:scaleX(0.8489);">Financials</div>
<div class="t" style="left:413.00px;top:161.76px;font-size:16px;line-height:16px;color:#464646;transform:scaleX(0.8182);">Services</div>
<div class="t" style="left:483.29px;top:161.76px;font-size:16px;line-height:16px;color:#464646;transform:scaleX(0.9069);">Interactions</div>
<div class="t" style="left:578.70px;top:161.76px;font-size:16px;line-height:16px;color:#464646;transform:scaleX(0.8994);">LinkedIn</div>
<div class="t" style="left:653.00px;top:161.76px;font-size:16px;line-height:16px;color:#464646;transform:scaleX(0.9102);">Collaboration</div>
<div class="t" style="left:758.84px;top:161.76px;font-size:16px;line-height:16px;color:#464646;transform:scaleX(0.8601);">Related</div>
<div class="t" style="left:72.80px;top:220.70px;font-size:13px;line-height:13px;color:#242424;transform:scaleX(0.8449);">CALL REPORTS</div>
<div class="t" style="left:614.42px;top:219.15px;font-size:14px;line-height:14px;color:#3c3b3a;transform:scaleX(0.8769);">New Call Report</div>
<div class="t" style="left:157.50px;top:260.44px;font-size:12px;line-height:12px;color:#3b3a39;-webkit-text-stroke:0.12px #3b3a39;transform:scaleX(0.8913);">Title</div>
<div class="t" style="left:405.00px;top:260.44px;font-size:12px;line-height:12px;color:#3b3a39;-webkit-text-stroke:0.12px #3b3a39;transform:scaleX(0.9251);">Dated</div>
<div class="t" style="left:571.00px;top:260.44px;font-size:12px;line-height:12px;color:#3b3a39;-webkit-text-stroke:0.12px #3b3a39;transform:scaleX(0.9334);">Next Follow-up</div>
<div class="t" style="left:156.03px;top:297.70px;font-size:13px;line-height:13px;color:#3369ad;transform:scaleX(0.9696);">Executive Appointment With Large Corp</div>
<div class="t" style="left:405.00px;top:297.70px;font-size:13px;line-height:13px;color:#3c3b3a;transform:scaleX(0.9947);">3/16/2022</div>
<div class="t" style="left:571.00px;top:297.70px;font-size:13px;line-height:13px;color:#3c3b3a;transform:scaleX(0.9826);">7/15/2021</div>
<div class="t" style="left:156.04px;top:335.75px;font-size:13px;line-height:13px;color:#3369ad;transform:scaleX(0.9620);">Executive Meeting</div>
<div class="t" style="left:405.00px;top:335.75px;font-size:13px;line-height:13px;color:#3c3b3a;transform:scaleX(0.9947);">8/23/2021</div>
<div class="t" style="left:571.00px;top:335.75px;font-size:13px;line-height:13px;color:#3c3b3a;transform:scaleX(0.9826);">12/6/2021</div>
<div class="t" style="left:156.02px;top:373.80px;font-size:13px;line-height:13px;color:#3369ad;transform:scaleX(0.9836);">Initial Limit Appointment With Large C...</div>
<div class="t" style="left:405.00px;top:373.80px;font-size:13px;line-height:13px;color:#3c3b3a;transform:scaleX(1.0124);">4/3/2020</div>
<div class="t" style="left:571.00px;top:373.80px;font-size:13px;line-height:13px;color:#3c3b3a;transform:scaleX(1.0025);">6/1/2020</div>
<div class="t" style="left:98.90px;top:438.64px;font-size:12px;line-height:12px;color:#3c3b3a;transform:scaleX(0.8619);">1 - 3 of 6</div>
<div class="t" style="left:672.90px;top:439.29px;font-size:11px;line-height:11px;color:#3c3b3a;transform:scaleX(0.8720);">Page 1</div>
<div class="t" style="left:773.60px;top:220.70px;font-size:13px;line-height:13px;color:#242424;transform:scaleX(0.8903);">CUSTOMER INTERACTIONS</div>
<div class="t" style="left:1288.91px;top:219.15px;font-size:14px;line-height:14px;color:#3c3b3a;transform:scaleX(0.8923);">New Customer Interac...</div>
<div class="t" style="left:858.80px;top:260.44px;font-size:12px;line-height:12px;color:#3b3a39;-webkit-text-stroke:0.12px #3b3a39;transform:scaleX(0.8628);">Name</div>
<div class="t" style="left:1280.60px;top:260.44px;font-size:12px;line-height:12px;color:#3b3a39;-webkit-text-stroke:0.12px #3b3a39;transform:scaleX(0.8996);">Created On</div>
<div class="t" style="left:858.80px;top:297.70px;font-size:13px;line-height:13px;color:#3369ad;transform:scaleX(0.9175);">Check Book Request</div>
<div class="t" style="left:1286.40px;top:297.70px;font-size:13px;line-height:13px;color:#3c3b3a;transform:scaleX(0.9759);">3/16/2022 6:18 PM</div>
<div class="t" style="left:857.86px;top:335.75px;font-size:13px;line-height:13px;color:#3369ad;transform:scaleX(0.9439);">Inquiry about LC Issuance</div>
<div class="t" style="left:1285.40px;top:335.75px;font-size:13px;line-height:13px;color:#3c3b3a;transform:scaleX(0.9851);">8/23/2021 7:32 PM</div>
<div class="t" style="left:857.83px;top:373.80px;font-size:13px;line-height:13px;color:#3369ad;transform:scaleX(0.9713);">New Authorized Signatory</div>
<div class="t" style="left:1285.40px;top:373.80px;font-size:13px;line-height:13px;color:#3c3b3a;transform:scaleX(0.9772);">5/11/2021 6:26 PM</div>
<div class="t" style="left:799.20px;top:438.64px;font-size:12px;line-height:12px;color:#3c3b3a;transform:scaleX(0.8933);">1 - 3 of 7</div>
<div class="t" style="left:1392.80px;top:439.29px;font-size:11px;line-height:11px;color:#3c3b3a;transform:scaleX(0.8922);">Page 1</div>
<div class="t" style="left:72.80px;top:528.90px;font-size:13px;line-height:13px;color:#242424;transform:scaleX(0.8976);">ACCOUNT PLANS</div>
<div class="t" style="left:578.10px;top:527.65px;font-size:14px;line-height:14px;color:#3c3b3a;transform:scaleX(0.8988);">New Account Planning</div>
<div class="t" style="left:156.80px;top:568.04px;font-size:12px;line-height:12px;color:#3b3a39;-webkit-text-stroke:0.12px #3b3a39;transform:scaleX(0.9030);">Name</div>
<div class="t" style="left:269.60px;top:568.04px;font-size:12px;line-height:12px;color:#3b3a39;-webkit-text-stroke:0.12px #3b3a39;transform:scaleX(0.9085);">Valid From</div>
<div class="t" style="left:382.00px;top:568.04px;font-size:12px;line-height:12px;color:#3b3a39;-webkit-text-stroke:0.12px #3b3a39;transform:scaleX(0.8783);">Valid To</div>
<div class="t" style="left:471.40px;top:568.04px;font-size:12px;line-height:12px;color:#3b3a39;-webkit-text-stroke:0.12px #3b3a39;transform:scaleX(0.8996);">Current Relationship Assessment</div>
<div class="t" style="left:156.80px;top:606.30px;font-size:13px;line-height:13px;color:#3369ad;transform:scaleX(0.9415);">23082019070...</div>
<div class="t" style="left:269.60px;top:606.30px;font-size:13px;line-height:13px;color:#3c3b3a;transform:scaleX(1.0045);">5/4/2022</div>
<div class="t" style="left:382.00px;top:606.30px;font-size:13px;line-height:13px;color:#3c3b3a;transform:scaleX(0.9700);">12/31/20...</div>
<div class="t" style="left:478.80px;top:606.30px;font-size:13px;line-height:13px;color:#3c3b3a;transform:scaleX(0.9630);">Grow</div>
<div class="t" style="left:98.00px;top:746.54px;font-size:12px;line-height:12px;color:#3c3b3a;transform:scaleX(0.8849);">1 - 1 of 1</div>
<div class="t" style="left:671.90px;top:747.69px;font-size:11px;line-height:11px;color:#3c3b3a;transform:scaleX(0.9238);">Page 1</div>
<div class="t" style="left:774.20px;top:528.90px;font-size:13px;line-height:13px;color:#242424;-webkit-text-stroke:0.22px #242424;transform:scaleX(0.9606);">Connections</div>
<div class="t" style="left:1332.09px;top:527.65px;font-size:14px;line-height:14px;color:#3c3b3a;transform:scaleX(0.9075);">New Connection</div>
<div class="t" style="left:820.80px;top:566.57px;font-size:11.5px;line-height:11.5px;color:#605e5c;transform:scaleX(0.9140);">Connected To</div>
<div class="t" style="left:983.60px;top:566.57px;font-size:11.5px;line-height:11.5px;color:#605e5c;transform:scaleX(0.8586);">Role (To)</div>
<div class="t" style="left:1146.20px;top:566.57px;font-size:11.5px;line-height:11.5px;color:#605e5c;transform:scaleX(0.9453);">Description</div>
<div class="t" style="left:820.80px;top:601.90px;font-size:13px;line-height:13px;color:#335e90;transform:scaleX(0.9294);">Grand Store</div>
<div class="t" style="left:983.60px;top:601.90px;font-size:13px;line-height:13px;color:#335e90;transform:scaleX(0.9345);">Supplier</div>
<div class="t" style="left:1145.17px;top:601.90px;font-size:13px;line-height:13px;color:#3c3b3a;transform:scaleX(1.0256);">Primary Supplier in the UK</div>
<div class="t" style="left:819.86px;top:637.65px;font-size:13px;line-height:13px;color:#335e90;transform:scaleX(0.9427);">Huey, Dewey &amp; Louie CPA</div>
<div class="t" style="left:983.60px;top:637.65px;font-size:13px;line-height:13px;color:#335e90;transform:scaleX(0.8622);">COI</div>
<div class="t" style="left:1146.20px;top:637.65px;font-size:13px;line-height:13px;color:#3c3b3a;transform:scaleX(1.0202);">Accounting Firm and Tax Guide</div>
<div class="t" style="left:820.80px;top:673.40px;font-size:13px;line-height:13px;color:#335e90;transform:scaleX(0.9345);">Williams Lawyers Pty Ltd</div>
<div class="t" style="left:983.60px;top:673.40px;font-size:13px;line-height:13px;color:#335e90;transform:scaleX(0.8622);">COI</div>
<div class="t" style="left:1145.20px;top:673.40px;font-size:13px;line-height:13px;color:#3c3b3a;transform:scaleX(1.0034);">Law Firm &amp; Real Estate Advisor</div>
</body></html>
